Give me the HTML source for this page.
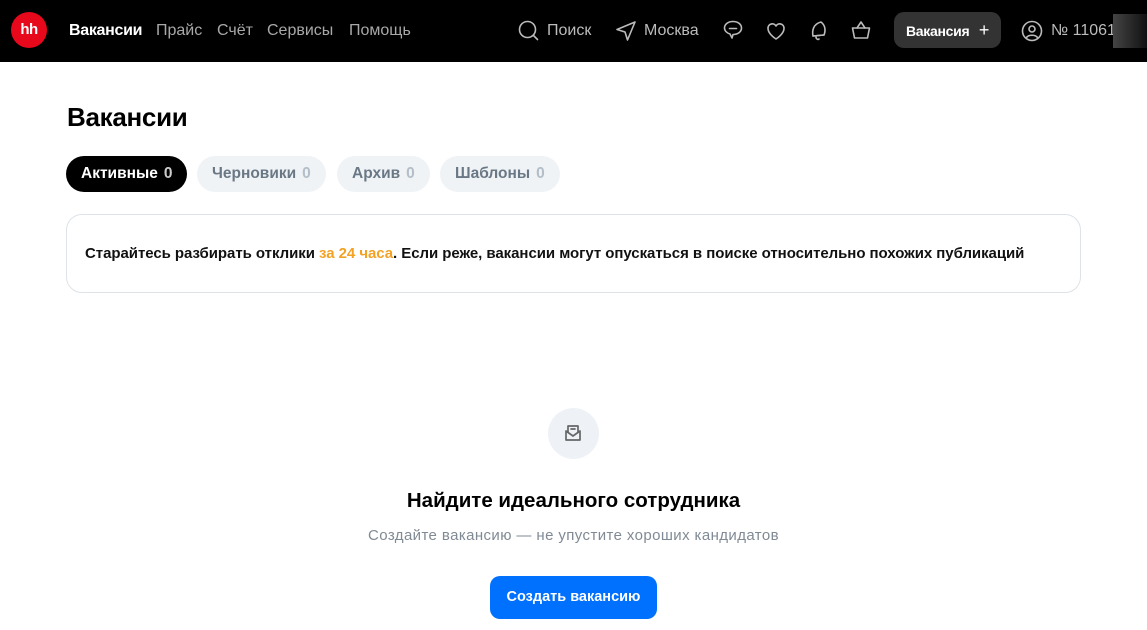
<!DOCTYPE html>
<html><head><meta charset="utf-8"><style>
*{margin:0;padding:0;box-sizing:border-box}
body{width:1147px;height:630px;overflow:hidden;background:#fff;font-family:"Liberation Sans",Arial,sans-serif;color:#000;position:relative}
.hdr{position:absolute;left:0;top:0;width:1147px;height:62px;background:#000}
.abs{position:absolute}
.logo{left:11px;top:12px;width:36px;height:36px;border-radius:50%;background:#e8081b;color:#fff;font-weight:bold;font-size:15px;text-align:center;line-height:36px;letter-spacing:-0.5px}
.nav{top:22px;font-size:16px;color:#a8a8a8}
.w{color:#fff;font-weight:bold;letter-spacing:-0.3px}
svg{position:absolute;fill:none;stroke:#bbb;stroke-width:1.6;stroke-linecap:round;stroke-linejoin:round}
.btn{left:894px;top:12px;width:107px;height:36px;border-radius:10px;background:#333;color:#fff;font-size:14px;font-weight:bold;line-height:36px;padding-left:12px;letter-spacing:-0.3px}
h1{position:absolute;left:67px;top:102px;font-size:26px;font-weight:bold;letter-spacing:-0.3px}
.tab{position:absolute;top:156px;height:36px;border-radius:18px;background:#eff3f6;color:#6a7885;font-size:15.5px;font-weight:bold;line-height:36px;padding:0 15px}
.tab span{color:#b3bec8;margin-left:6px}
.tab.a{background:#000;color:#fff}.tab.a span{color:#ccc}
.card{position:absolute;left:66px;top:214px;width:1015px;height:79px;border:1px solid #dde3e8;border-radius:16px;font-size:15px;font-weight:bold;padding:30px 0 0 18px;color:#111;letter-spacing:-0.05px}
.card b{color:#f3a223}
.circ{position:absolute;left:548px;top:408px;width:51px;height:51px;border-radius:50%;background:#eef2f6}
.t2{position:absolute;left:0;width:1147px;text-align:center}
.cbtn{position:absolute;left:490px;top:576px;width:167px;height:43px;border-radius:10px;background:#0070ff;color:#fff;font-size:14.5px;font-weight:bold;text-align:center;line-height:43px}
</style></head><body>
<div class="hdr">
<div class="abs logo">hh</div>
<div class="abs nav w" style="left:69px">Вакансии</div>
<div class="abs nav" style="left:156px">Прайс</div>
<div class="abs nav" style="left:217px">Счёт</div>
<div class="abs nav" style="left:267px">Сервисы</div>
<div class="abs nav" style="left:349px">Помощь</div>
<svg style="left:517px;top:19px" width="24" height="24" viewBox="0 0 24 24"><circle cx="10.5" cy="10.5" r="8"/><path d="M16.5 16.5l4 4"/></svg>
<div class="abs nav" style="left:547px;color:#bbb">Поиск</div>
<svg style="left:614px;top:19px" width="24" height="24" viewBox="0 0 24 24"><path d="M21 3L3 10.5l8 2.5 2.5 8z"/></svg>
<div class="abs nav" style="left:644px;color:#bbb">Москва</div>
<svg style="left:721px;top:18px" width="24" height="24" viewBox="0 0 24 24"><path d="M12 3.5c5 0 8.5 2.8 8.5 6.5s-3.5 6.5-8.5 6.5l-1 3.5-2-4c-3.3-1-5.5-3.3-5.5-6 0-3.7 3.5-6.5 8.5-6.5z"/><path d="M8.5 10.5h7"/></svg>
<svg style="left:764px;top:19px" width="24" height="24" viewBox="0 0 24 24"><path d="M12 20s-8-5-8-10.5A4.3 4.3 0 0112 7a4.3 4.3 0 018 2.5C20 15 12 20 12 20z"/></svg>
<svg style="left:807px;top:18px" width="24" height="26" viewBox="0 0 24 26"><path d="M6 18c-1-5 0-12 8-14 4 3 5 8 3 13z"/><path d="M6 18l11-1M9 19c0 2 2 3 3 2"/></svg>
<svg style="left:849px;top:18px" width="24" height="24" viewBox="0 0 24 24"><path d="M3.5 10h17l-2 10h-13z"/><path d="M8 10l4-6 4 6"/></svg>
<div class="abs btn">Вакансия <span style="font-weight:normal;font-size:18px;margin-left:6px">+</span></div>
<svg style="left:1020px;top:19px" width="24" height="24" viewBox="0 0 24 24"><circle cx="12" cy="12" r="9.5"/><circle cx="12" cy="10" r="3"/><path d="M6.5 18.5c2-3 9-3 11 0"/></svg>
<div class="abs nav" style="left:1051px;color:#bbb">№ 11061</div>
<div class="abs" style="left:1113px;top:14px;width:34px;height:34px;background:linear-gradient(90deg,#444,#111)"></div>
</div>
<h1>Вакансии</h1>
<div class="tab a" style="left:66px">Активные<span>0</span></div>
<div class="tab" style="left:197px">Черновики<span>0</span></div>
<div class="tab" style="left:337px">Архив<span>0</span></div>
<div class="tab" style="left:440px">Шаблоны<span>0</span></div>
<div class="card">Старайтесь разбирать отклики <b>за 24 часа</b>. Если реже, вакансии могут опускаться в поиске относительно похожих публикаций</div>
<div class="circ"><svg style="left:14px;top:14px;stroke:#666;stroke-width:1.7" width="22" height="22" viewBox="0 0 22 22"><path d="M4 9V18h14V9M4 9l7 5 7-5"/><path d="M6 10V4h10v6M9 7h4"/></svg></div>
<div class="t2" style="top:489px;font-size:20.5px;font-weight:bold">Найдите идеального сотрудника</div>
<div class="t2" style="top:527px;font-size:15px;color:#808a94;letter-spacing:0.4px">Создайте вакансию — не упустите хороших кандидатов</div>
<div class="cbtn">Создать вакансию</div>
</body></html>
